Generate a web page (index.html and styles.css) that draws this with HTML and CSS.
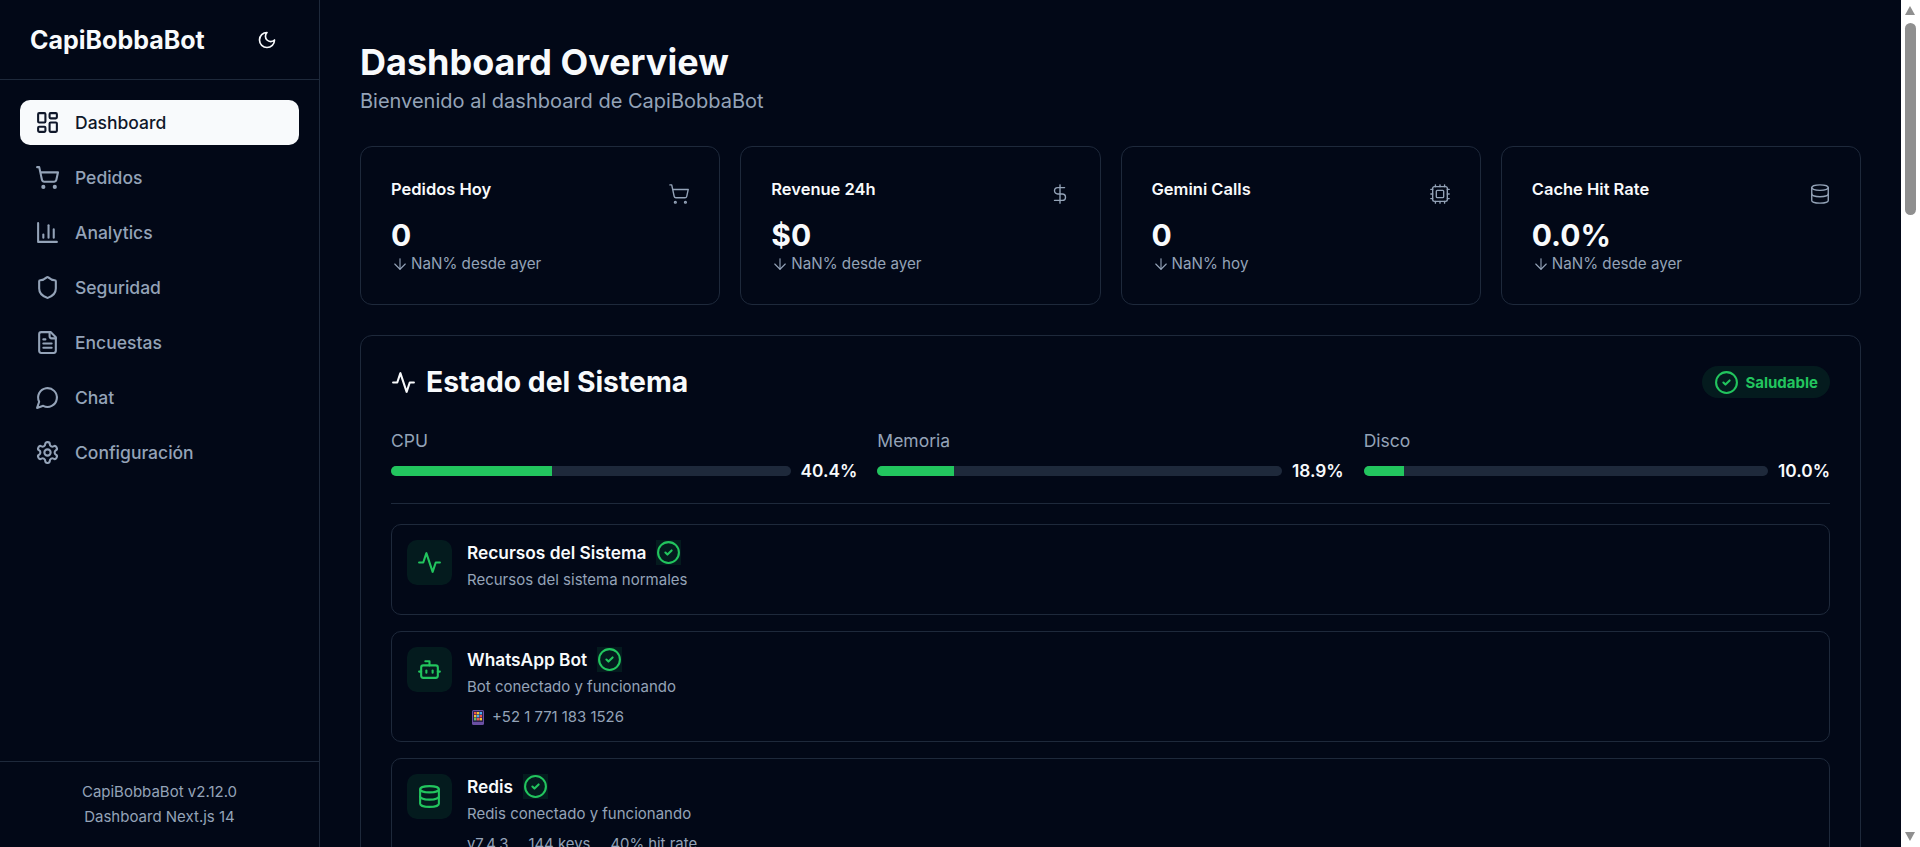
FILE: index.html
```html
<!DOCTYPE html>
<html lang="es">
<head>
  <meta charset="UTF-8" />
  <meta name="viewport" content="width=device-width, initial-scale=1.0"/>
  <title>CapiBobbaBot Dashboard</title>
  <link rel="stylesheet" href="styles.css">
</head>
<body>

  <svg class="sprite" xmlns="http://www.w3.org/2000/svg">
    <symbol id="i-dashboard" viewBox="0 0 24 24"><rect x="3" y="3" width="7" height="9" rx="1"/><rect x="14" y="3" width="7" height="5" rx="1"/><rect x="14" y="12" width="7" height="9" rx="1"/><rect x="3" y="16" width="7" height="5" rx="1"/></symbol>
    <symbol id="i-cart" viewBox="0 0 24 24"><circle cx="8" cy="21" r="1"/><circle cx="19" cy="21" r="1"/><path d="M2.05 2.05h2l2.66 12.42a2 2 0 0 0 2 1.58h9.78a2 2 0 0 0 1.95-1.57l1.65-7.43H5.12"/></symbol>
    <symbol id="i-chart" viewBox="0 0 24 24"><path d="M3 3v18h18"/><path d="M18 17V9"/><path d="M13 17V5"/><path d="M8 17v-3"/></symbol>
    <symbol id="i-shield" viewBox="0 0 24 24"><path d="M20 13c0 5-3.5 7.5-7.66 8.95a1 1 0 0 1-.67-.01C7.5 20.5 4 18 4 13V6a1 1 0 0 1 1-1c2 0 4.5-1.2 6.24-2.72a1.17 1.17 0 0 1 1.52 0C14.51 3.81 17 5 19 5a1 1 0 0 1 1 1z"/></symbol>
    <symbol id="i-file" viewBox="0 0 24 24"><path d="M15 2H6a2 2 0 0 0-2 2v16a2 2 0 0 0 2 2h12a2 2 0 0 0 2-2V7Z"/><path d="M14 2v4a2 2 0 0 0 2 2h4"/><path d="M10 9H8"/><path d="M16 13H8"/><path d="M16 17H8"/></symbol>
    <symbol id="i-chat" viewBox="0 0 24 24"><path d="M7.9 20A9 9 0 1 0 4 16.1L2 22Z"/></symbol>
    <symbol id="i-gear" viewBox="0 0 24 24"><path d="M12.22 2h-.44a2 2 0 0 0-2 2v.18a2 2 0 0 1-1 1.73l-.43.25a2 2 0 0 1-2 0l-.15-.08a2 2 0 0 0-2.73.73l-.22.38a2 2 0 0 0 .73 2.73l.15.1a2 2 0 0 1 1 1.72v.51a2 2 0 0 1-1 1.74l-.15.09a2 2 0 0 0-.73 2.73l.22.38a2 2 0 0 0 2.73.73l.15-.08a2 2 0 0 1 2 0l.43.25a2 2 0 0 1 1 1.73V20a2 2 0 0 0 2 2h.44a2 2 0 0 0 2-2v-.18a2 2 0 0 1 1-1.73l.43-.25a2 2 0 0 1 2 0l.15.08a2 2 0 0 0 2.73-.73l.22-.39a2 2 0 0 0-.73-2.73l-.15-.08a2 2 0 0 1-1-1.74v-.5a2 2 0 0 1 1-1.74l.15-.09a2 2 0 0 0 .73-2.73l-.22-.38a2 2 0 0 0-2.73-.73l-.15.08a2 2 0 0 1-2 0l-.43-.25a2 2 0 0 1-1-1.73V4a2 2 0 0 0-2-2z"/><circle cx="12" cy="12" r="3"/></symbol>
    <symbol id="i-moon" viewBox="0 0 24 24"><path d="M12 3a6 6 0 0 0 9 9 9 9 0 1 1-9-9Z"/></symbol>
    <symbol id="i-dollar" viewBox="0 0 24 24"><line x1="12" y1="2" x2="12" y2="22"/><path d="M17 5H9.5a3.5 3.5 0 0 0 0 7h5a3.5 3.5 0 0 1 0 7H6"/></symbol>
    <symbol id="i-cpu" viewBox="0 0 24 24"><rect x="4" y="4" width="16" height="16" rx="2"/><rect x="8" y="8" width="8" height="8" rx="1"/><path d="M12 20v2M12 2v2M17 20v2M17 2v2M2 12h2M2 17h2M2 7h2M20 12h2M20 17h2M20 7h2M7 20v2M7 2v2"/></symbol>
    <symbol id="i-db" viewBox="0 0 24 24"><ellipse cx="12" cy="5" rx="9" ry="3"/><path d="M3 5V19A9 3 0 0 0 21 19V5"/><path d="M3 12A9 3 0 0 0 21 12"/></symbol>
    <symbol id="i-activity" viewBox="0 0 24 24"><path d="M22 12h-4l-3 9L9 3l-3 9H2"/></symbol>
    <symbol id="i-bot" viewBox="0 0 24 24"><path d="M12 8V4H8"/><rect x="4" y="8" width="16" height="12" rx="2"/><path d="M2 14h2"/><path d="M20 14h2"/><path d="M15 13v2"/><path d="M9 13v2"/></symbol>
    <symbol id="i-check" viewBox="0 0 24 24"><circle cx="12" cy="12" r="10"/><path d="m9 12 2 2 4-4"/></symbol>
    <symbol id="i-down" viewBox="0 0 24 24"><path d="M12 5v14"/><path d="m19 12-7 7-7-7"/></symbol>
  </svg>

  <div class="layout">
    <aside class="sidebar">
      <div class="brand">
        <span class="brand-name">CapiBobbaBot</span>
        <svg class="icon theme-icon"><use href="#i-moon"/></svg>
      </div>

      <nav class="nav">
        <a class="nav-item active"><svg class="icon"><use href="#i-dashboard"/></svg>Dashboard</a>
        <a class="nav-item"><svg class="icon"><use href="#i-cart"/></svg>Pedidos</a>
        <a class="nav-item"><svg class="icon"><use href="#i-chart"/></svg>Analytics</a>
        <a class="nav-item"><svg class="icon"><use href="#i-shield"/></svg>Seguridad</a>
        <a class="nav-item"><svg class="icon"><use href="#i-file"/></svg>Encuestas</a>
        <a class="nav-item"><svg class="icon"><use href="#i-chat"/></svg>Chat</a>
        <a class="nav-item"><svg class="icon"><use href="#i-gear"/></svg>Configuración</a>
      </nav>

      <div class="sidebar-footer">
        <p>CapiBobbaBot v2.12.0</p>
        <p>Dashboard Next.js 14</p>
      </div>
    </aside>

    <main class="main">
      <h1>Dashboard Overview</h1>
      <p class="subtitle">Bienvenido al dashboard de CapiBobbaBot</p>

      <section class="stats">
        <div class="stat">
          <div class="stat-head"><span>Pedidos Hoy</span><svg class="icon stat-icon"><use href="#i-cart"/></svg></div>
          <div class="stat-value">0</div>
          <div class="stat-note"><svg class="icon"><use href="#i-down"/></svg>NaN% desde ayer</div>
        </div>
        <div class="stat">
          <div class="stat-head"><span>Revenue 24h</span><svg class="icon stat-icon"><use href="#i-dollar"/></svg></div>
          <div class="stat-value">$0</div>
          <div class="stat-note"><svg class="icon"><use href="#i-down"/></svg>NaN% desde ayer</div>
        </div>
        <div class="stat">
          <div class="stat-head"><span>Gemini Calls</span><svg class="icon stat-icon"><use href="#i-cpu"/></svg></div>
          <div class="stat-value">0</div>
          <div class="stat-note"><svg class="icon"><use href="#i-down"/></svg>NaN% hoy</div>
        </div>
        <div class="stat">
          <div class="stat-head"><span>Cache Hit Rate</span><svg class="icon stat-icon"><use href="#i-db"/></svg></div>
          <div class="stat-value">0.0%</div>
          <div class="stat-note"><svg class="icon"><use href="#i-down"/></svg>NaN% desde ayer</div>
        </div>
      </section>

      <section class="system">
        <div class="system-head">
          <h2><svg class="icon"><use href="#i-activity"/></svg>Estado del Sistema</h2>
          <span class="badge"><svg class="icon"><use href="#i-check"/></svg>Saludable</span>
        </div>

        <div class="meters">
          <div class="meter">
            <div class="meter-label">CPU</div>
            <div class="meter-row">
              <div class="bar"><div class="bar-fill" style="width: 40.4%"></div></div>
              <span class="meter-value">40.4%</span>
            </div>
          </div>
          <div class="meter">
            <div class="meter-label">Memoria</div>
            <div class="meter-row">
              <div class="bar"><div class="bar-fill" style="width: 18.9%"></div></div>
              <span class="meter-value">18.9%</span>
            </div>
          </div>
          <div class="meter">
            <div class="meter-label">Disco</div>
            <div class="meter-row">
              <div class="bar"><div class="bar-fill" style="width: 10%"></div></div>
              <span class="meter-value">10.0%</span>
            </div>
          </div>
        </div>

        <div class="services">
          <div class="service">
            <div class="service-icon"><svg class="icon"><use href="#i-activity"/></svg></div>
            <div>
              <div class="service-title">Recursos del Sistema <span class="service-ok"><svg class="icon"><use href="#i-check"/></svg></span></div>
              <p class="service-text">Recursos del sistema normales</p>
            </div>
          </div>

          <div class="service">
            <div class="service-icon"><svg class="icon"><use href="#i-bot"/></svg></div>
            <div>
              <div class="service-title">WhatsApp Bot <span class="service-ok"><svg class="icon"><use href="#i-check"/></svg></span></div>
              <p class="service-text">Bot conectado y funcionando</p>
              <div class="service-meta">
                <span class="phone-line">
                  <svg class="phone" viewBox="0 0 12 15">
                    <rect width="12" height="15" rx="1.5" fill="#6a4fa3"/>
                    <rect x="1" y="1" width="10" height="11" fill="#2b2350"/>
                    <rect x="2" y="2" width="2.4" height="2.4" fill="#f0564a"/>
                    <rect x="4.8" y="2" width="2.4" height="2.4" fill="#f7c233"/>
                    <rect x="7.6" y="2" width="2.4" height="2.4" fill="#4fb0f0"/>
                    <rect x="2" y="5" width="2.4" height="2.4" fill="#f7c233"/>
                    <rect x="4.8" y="5" width="2.4" height="2.4" fill="#4fb0f0"/>
                    <rect x="7.6" y="5" width="2.4" height="2.4" fill="#f0564a"/>
                    <rect x="2" y="8" width="2.4" height="2.4" fill="#66c262"/>
                    <rect x="4.8" y="8" width="2.4" height="2.4" fill="#f0564a"/>
                    <rect x="7.6" y="8" width="2.4" height="2.4" fill="#f7c233"/>
                  </svg>
                  +52 1 771 183 1526
                </span>
              </div>
            </div>
          </div>

          <div class="service">
            <div class="service-icon"><svg class="icon"><use href="#i-db"/></svg></div>
            <div>
              <div class="service-title">Redis <span class="service-ok"><svg class="icon"><use href="#i-check"/></svg></span></div>
              <p class="service-text">Redis conectado y funcionando</p>
              <div class="service-meta">
                <span>v7.4.3</span>
                <span>144 keys</span>
                <span>40% hit rate</span>
              </div>
            </div>
          </div>
        </div>
      </section>
    </main>

    <div class="scrollbar">
      <span class="arrow arrow-up"></span>
      <div class="thumb"></div>
      <span class="arrow arrow-down"></span>
    </div>
  </div>

</body>
</html>
```

FILE: styles.css
```css
* {
  box-sizing: border-box;
}

body {
  margin: 0;
  height: 100vh;
  overflow: hidden;
  background: #020817;
  color: #f8fafc;
  font-family: Inter, "Liberation Sans", sans-serif;
}

p, h1, h2 {
  margin: 0;
}

.sprite {
  display: none;
}

.icon {
  width: 25px;
  height: 25px;
  flex-shrink: 0;
  fill: none;
  stroke: currentColor;
  stroke-width: 2;
  stroke-linecap: round;
  stroke-linejoin: round;
}

.layout {
  display: flex;
  height: 100vh;
}

/* sidebar */
.sidebar {
  width: 320px;
  flex-shrink: 0;
  display: flex;
  flex-direction: column;
  border-right: 1px solid #1e293b;
}

.brand {
  height: 80px;
  padding: 0 30px;
  display: flex;
  align-items: center;
  justify-content: space-between;
  border-bottom: 1px solid #1e293b;
}

.brand-name {
  font-size: 25px;
  font-weight: 700;
}

.theme-icon {
  width: 20px;
  height: 20px;
  margin-right: 12px;
}

.nav {
  flex: 1;
  padding: 20px;
  display: flex;
  flex-direction: column;
  gap: 10px;
}

.nav-item {
  height: 45px;
  padding: 0 15px;
  display: flex;
  align-items: center;
  gap: 15px;
  border-radius: 10px;
  font-size: 17.5px;
  font-weight: 500;
  color: #94a3b8;
}

.nav-item.active {
  background: #f8fafc;
  color: #0f172a;
}

.sidebar-footer {
  padding: 17px 20px 18px;
  border-top: 1px solid #1e293b;
  text-align: center;
  font-size: 15px;
  line-height: 25px;
  color: #94a3b8;
}

/* main column */
.main {
  flex: 1;
  min-width: 0;
  padding: 40px;
  overflow: hidden;
}

h1 {
  font-size: 36px;
  line-height: 44px;
  font-weight: 700;
}

.subtitle {
  margin-top: 4px;
  font-size: 20px;
  line-height: 26px;
  color: #94a3b8;
}

/* stat cards */
.stats {
  margin-top: 32px;
  display: grid;
  grid-template-columns: repeat(4, 1fr);
  gap: 20px;
}

.stat {
  height: 159px;
  padding: 32px 30px 0;
  border: 1px solid #1e293b;
  border-radius: 12px;
}

.stat-head {
  height: 20px;
  display: flex;
  justify-content: space-between;
  align-items: flex-start;
  font-size: 16.5px;
  font-weight: 600;
  line-height: 20px;
}

.stat-icon {
  width: 22px;
  height: 22px;
  margin-top: 4px;
  margin-right: -1px;
  color: #94a3b8;
  stroke-width: 1.5;
}

.stat-value {
  margin-top: 18px;
  font-size: 30px;
  line-height: 36px;
  font-weight: 700;
}

.stat-note {
  margin-top: 1px;
  display: flex;
  align-items: center;
  gap: 2px;
  font-size: 15.2px;
  line-height: 20px;
  color: #94a3b8;
}

.stat-note .icon {
  width: 18px;
  height: 18px;
  stroke-width: 1.5;
}

/* system status */
.system {
  margin-top: 30px;
  padding: 30px;
  border: 1px solid #1e293b;
  border-radius: 12px;
}

.system-head {
  display: flex;
  align-items: center;
  justify-content: space-between;
}

h2 {
  display: flex;
  align-items: center;
  gap: 10px;
  font-size: 28.3px;
  line-height: 32px;
  font-weight: 700;
}

.badge {
  height: 32px;
  padding: 0 12px;
  display: flex;
  align-items: center;
  gap: 6px;
  border-radius: 16px;
  background: rgba(34, 197, 94, 0.1);
  color: #22c55e;
  font-size: 15px;
  font-weight: 700;
}

.meters {
  margin-top: 31px;
  padding-bottom: 20px;
  display: grid;
  grid-template-columns: repeat(3, 1fr);
  gap: 20px;
  border-bottom: 1px solid #1e293b;
}

.meter-label {
  font-size: 17.5px;
  line-height: 24px;
  color: #94a3b8;
}

.meter-row {
  margin-top: 6px;
  display: flex;
  align-items: center;
  gap: 10px;
}

.bar {
  flex: 1;
  height: 10px;
  border-radius: 5px;
  background: #1e293b;
  overflow: hidden;
}

.bar-fill {
  height: 100%;
  background: #22c55e;
}

.meter-value {
  font-size: 17.3px;
  line-height: 24px;
  font-weight: 600;
}

.services {
  margin-top: 20px;
  display: flex;
  flex-direction: column;
  gap: 16px;
}

.service {
  min-height: 91px;
  padding: 15px 15px 14px;
  display: flex;
  gap: 15px;
  border: 1px solid #1e293b;
  border-radius: 10px;
}

.service-icon {
  width: 45px;
  height: 45px;
  flex-shrink: 0;
  display: flex;
  align-items: center;
  justify-content: center;
  border-radius: 10px;
  background: rgba(34, 197, 94, 0.1);
  color: #22c55e;
}

.service-title {
  display: flex;
  align-items: center;
  gap: 10px;
  font-size: 17.3px;
  line-height: 25px;
  font-weight: 600;
}

.service-ok {
  width: 25px;
  height: 25px;
  display: flex;
  align-items: center;
  justify-content: center;
  background: rgba(34, 197, 94, 0.1);
  color: #22c55e;
}

.service-text {
  margin-top: 5px;
  font-size: 15px;
  line-height: 20px;
  color: #94a3b8;
}

.service-meta {
  margin-top: 10px;
  display: flex;
  gap: 20px;
  font-size: 14.9px;
  line-height: 20px;
  color: #94a3b8;
}

.phone-line {
  display: flex;
  align-items: center;
  gap: 8px;
  padding-left: 5px;
}

.phone {
  width: 12px;
  height: 15px;
}

/* fake browser scrollbar, the page is photographed at a fixed size */
.scrollbar {
  width: 19px;
  flex-shrink: 0;
  background: #fff;
  position: relative;
}

.thumb {
  position: absolute;
  top: 23px;
  left: 4px;
  width: 11px;
  height: 192px;
  border-radius: 6px;
  background: #8f8f8f;
}

.arrow {
  position: absolute;
  left: 4px;
  width: 0;
  height: 0;
  border-left: 5.5px solid transparent;
  border-right: 5.5px solid transparent;
}

.arrow-up {
  top: 6px;
  border-bottom: 9px solid #8f8f8f;
}

.arrow-down {
  bottom: 6px;
  border-top: 9px solid #8f8f8f;
}
```
